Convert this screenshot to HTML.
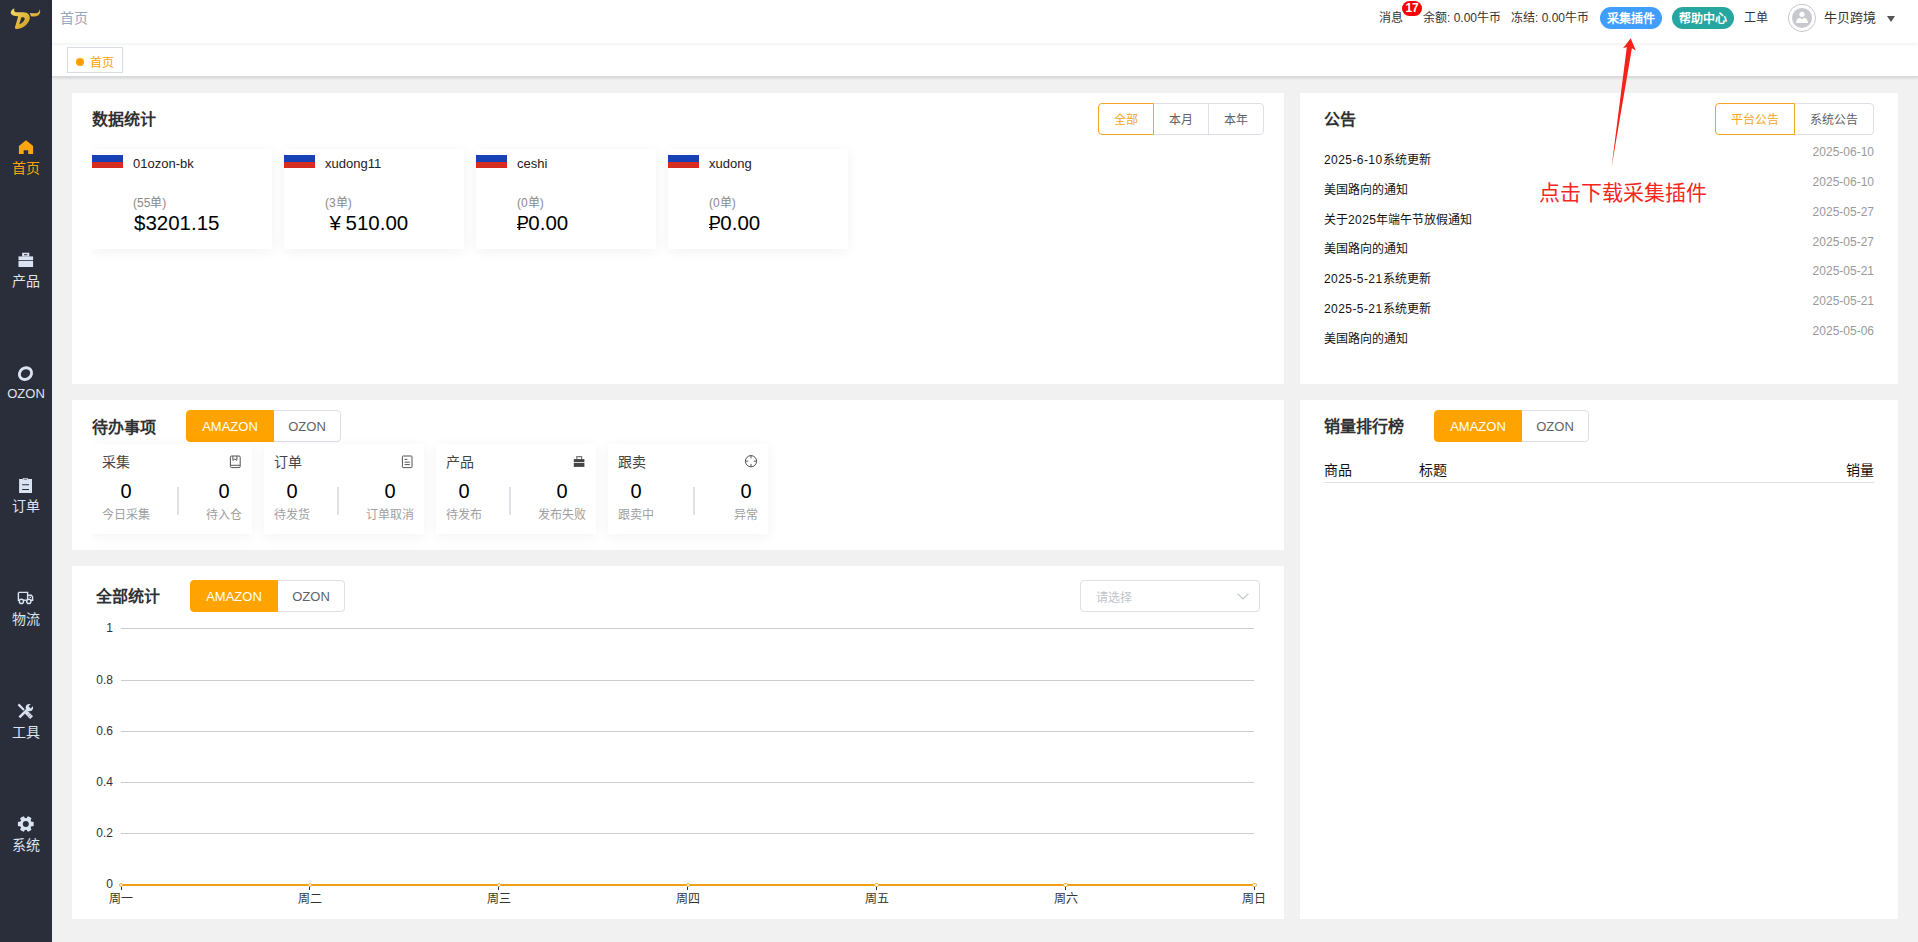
<!DOCTYPE html>
<html lang="zh-CN">
<head>
<meta charset="utf-8">
<title>首页</title>
<style>
*{box-sizing:border-box;margin:0;padding:0}
html,body{width:1918px;height:942px;overflow:hidden;background:#f1f1f1;font-family:"Liberation Sans",sans-serif;color:#303133;-webkit-font-smoothing:antialiased}
.abs{position:absolute}
/* sidebar */
#side{position:absolute;left:0;top:0;width:52px;height:942px;background:#2a2e3b}
.mi{position:absolute;left:0;width:52px;text-align:center;color:#dde4ee;font-size:14px;line-height:16px}
.mi svg{position:absolute}
.mi span{position:absolute;left:0;width:52px;text-align:center}
.mi.act{color:#ffa412}
/* header */
#hdr{position:absolute;left:52px;top:0;width:1866px;height:43px;background:#fff;box-shadow:0 1px 4px rgba(0,21,41,.08);z-index:3}
#hdr .bc{position:absolute;left:8px;top:9px;font-size:14px;line-height:18px;color:#97a8be}
.ht{position:absolute;top:10px;font-size:12px;line-height:16px;color:#333;white-space:nowrap}
.pill{position:absolute;top:7px;height:22px;width:62px;border-radius:11px;color:#fff;font-size:12px;font-weight:bold;line-height:24px;text-align:center;white-space:nowrap}
/* tags */
#tags{position:absolute;left:52px;top:43px;width:1866px;height:34px;background:#fff;border-bottom:1px solid #d9dadd;box-shadow:0 1px 3px 0 rgba(0,0,0,.12),0 0 3px 0 rgba(0,0,0,.04)}
#tags .tag{position:absolute;left:15px;top:4px;width:56px;height:26px;border:1px solid #d8dce5;background:#fff;color:#ffa000;font-size:12px;line-height:24px}
#tags .tag i{position:absolute;left:8px;top:10px;width:8px;height:8px;border-radius:50%;background:#ffa000}
#tags .tag span{position:absolute;left:22px;top:3px}
/* cards */
.card{position:absolute;background:#fff}
.ttl{position:absolute;font-size:16px;font-weight:bold;line-height:20px;color:#303133;white-space:nowrap}
.bg{position:absolute;height:32px;display:flex}
.bg div{height:32px;border:1px solid #dcdfe6;background:#fff;color:#606266;font-size:12px;line-height:32px;text-align:center;margin-left:-1px;white-space:nowrap}
.bg div:first-child{margin-left:0;border-radius:4px 0 0 4px}
.bg div:last-child{border-radius:0 4px 4px 0}
.bg div.on{background:#ffa300;border-color:#ffa300;color:#fff;position:relative}
.bg div.ol{border-color:#f5a623;color:#f5a623;position:relative;z-index:1}
.bg div.lat{font-size:13px}

.shop{position:absolute;top:56px;width:180px;height:99.5px;background:#fff;box-shadow:0 2px 12px 0 rgba(10,20,60,.06)}
.shop .fl{position:absolute;left:0;top:6px;width:31px;height:13px;background:linear-gradient(#1741b5 0,#1741b5 50%,#d52d20 50%,#d52d20 100%)}
.shop .nm{position:absolute;left:41px;top:7px;font-size:13px;line-height:16px;color:#222;white-space:nowrap}
.shop .ct{position:absolute;left:41px;top:46px;font-size:12px;line-height:16px;color:#8a8a8a;white-space:nowrap}
.shop .am{position:absolute;left:42px;top:62px;font-size:20.5px;line-height:24px;color:#000;white-space:nowrap}
.rub{position:relative;display:inline-block;transform:scaleX(.87);transform-origin:0 50%;margin-left:-1.4px;margin-right:-2px}
.rub:after{content:"";position:absolute;left:-.2px;top:15.7px;width:10px;height:1.1px;background:#000}
.rub:before{content:"";position:absolute;left:-.2px;top:12.5px;width:4px;height:1.1px;background:#000}
.clip{position:absolute;overflow:hidden}
.nt{position:absolute;left:24px;font-size:12px;line-height:16px;color:#111;white-space:nowrap}
.nd{position:absolute;right:24px;font-size:12px;line-height:16px;color:#9a9a9a;white-space:nowrap}

.td{position:absolute;top:44px;width:160px;height:90px;background:#fff;box-shadow:0 2px 12px 0 rgba(10,20,60,.055)}
.td .h{position:absolute;left:10px;top:10px;font-size:14px;line-height:16px;color:#444}
.td svg{position:absolute}
.td .dv{position:absolute;top:43px;width:2px;margin-left:-1px;height:28px;background:#e1e2e8}
.td .col{position:absolute;top:34px;text-align:center;white-space:nowrap}
.td .col b{display:block;font-weight:normal;font-size:20px;line-height:26px;color:#000}
.td .col i{display:block;font-style:normal;font-size:12px;line-height:16px;color:#a0a0a0;margin-top:3px}
.gl{position:absolute;left:49px;width:1133.4px;height:1px;background:#ccc}
.yl{position:absolute;left:0;width:41px;text-align:right;font-size:12px;line-height:14px;color:#333}
.xl{position:absolute;top:325.5px;width:40px;margin-left:-20px;text-align:center;font-size:12px;line-height:14px;color:#333}
.xt{position:absolute;top:319.6px;width:1px;height:4px;background:#333}
.pt{position:absolute;top:316.5px;width:4.4px;height:4.4px;margin-left:-2.2px;border-radius:50%;background:#fff;border:1px solid #f3b040}
</style>
</head>
<body>
<div id="side">
<svg class="abs" style="left:0;top:0" width="52" height="40" viewBox="0 0 52 40">
<defs><linearGradient id="gd" x1="0" y1="0" x2="1" y2="1"><stop offset="0" stop-color="#f7dc72"/><stop offset=".55" stop-color="#e2b93a"/><stop offset="1" stop-color="#c79a22"/></linearGradient></defs>
<path fill="url(#gd)" fill-rule="evenodd" d="M14.4 8.2 C12 9.5 10.2 11.5 10.8 13.2 C11.4 15.2 14 16.2 17.6 16.2 L18.2 16.3 L15 27.2 C14.8 28.6 15.8 29.2 17.6 29 C23 28.4 28 24.8 29.6 19.6 C30.6 16 28.6 12.9 25 12.5 C21 12.1 17.6 12.6 15.8 12.2 C14.2 11.8 13.8 10 14.4 8.2 Z M21.4 17.2 L19.2 24.4 C22.2 23.4 24.6 21 24.8 18.6 C24.8 17.6 23.6 17 21.4 17.2 Z"/>
<path fill="url(#gd)" d="M29.6 12.9 C32.5 13.3 35.5 13.5 37.2 12.9 C38.8 12.3 39.6 10.8 39.8 9 C40.6 11.4 40.2 14 38.6 15.2 C36.6 16.6 33 16.6 30.9 16.2 C30.7 15 30.3 14 29.6 12.9 Z"/>
</svg>
<!-- home -->
<div class="mi act" style="top:134px;height:46px">
<svg style="left:18px;top:6px" width="16" height="15" viewBox="0 0 16 15"><path fill="#ffa412" d="M8 .2 L15.1 5.9 V14 H10.2 V10.2 H5.7 V14 H.9 V5.9 Z"/></svg>
<span style="top:26px">首页</span></div>
<!-- product -->
<div class="mi" style="top:247px;height:46px">
<svg style="left:18px;top:5px" width="16" height="16" viewBox="0 0 16 16"><g fill="#d9e3f2"><path d="M4.1.7 H11.3 V4.4 H4.1 Z M6 2.3 V3.3 H9.4 V2.3 Z" fill-rule="evenodd"/><rect x=".5" y="4.4" width="14.6" height="3.6"/><rect x=".5" y="8.8" width="14.6" height="6.2"/></g></svg>
<span style="top:26px">产品</span></div>
<!-- ozon -->
<div class="mi" style="top:360px;height:46px">
<svg style="left:17px;top:5px" width="18" height="17" viewBox="0 0 18 17"><ellipse cx="8.5" cy="8.6" rx="6.4" ry="5.6" transform="rotate(-38 8.5 8.6)" fill="none" stroke="#d9e3f2" stroke-width="2.9"/></svg>
<span style="top:26px;font-size:13px">OZON</span></div>
<!-- order -->
<div class="mi" style="top:472px;height:46px">
<svg style="left:18px;top:5px" width="16" height="17" viewBox="0 0 16 17"><path fill="#d9e3f2" fill-rule="evenodd" d="M1.1 2 H4.9 V.9 H9.9 V2 H14 V16.1 H1.1 Z M5.6 1.7 H9.2 V2.5 H5.6 Z M4.1 7.2 H11 V8.2 H4.1 Z M4.1 11.9 H11 V12.9 H4.1 Z"/></svg>
<span style="top:26px">订单</span></div>
<!-- truck -->
<div class="mi" style="top:585px;height:46px">
<svg style="left:17px;top:6px" width="18" height="16" viewBox="0 0 18 16"><g fill="none" stroke="#d9e3f2" stroke-width="1.4"><path d="M1.4 1.4 H10.6 V9.2"/><path d="M1.4 1.4 V9.2 H2.2"/><path d="M6.6 9.2 H9.6"/><path d="M10.6 4.2 H14.4 L15.6 6 V9.2 H14"/><circle cx="4.4" cy="10.4" r="2.1"/><circle cx="11.8" cy="10.4" r="2.1"/><path d="M12.6 6.3 H14" stroke-width="1.2"/></g></svg>
<span style="top:26px">物流</span></div>
<!-- tools -->
<div class="mi" style="top:698px;height:46px">
<svg style="left:17px;top:5px" width="18" height="17" viewBox="0 0 18 17"><g stroke="#d9e3f2" fill="none"><path d="M2.4 14.4 L11 5.8" stroke-width="2.6"/><circle cx="12.4" cy="4.6" r="3.7" fill="#d9e3f2" stroke="none"/><path d="M12.6 4.4 L17.4 -.4" stroke="#2a2e3b" stroke-width="3"/><path d="M1.4 1.4 L7 7" stroke-width="2.2"/><path d="M9.2 9.2 L14.6 14.6" stroke-width="4"/><path d="M10.4 12.4 L12.6 10.2 M12 14 L14.2 11.8" stroke="#2a2e3b" stroke-width=".7" opacity=".55"/></g></svg>
<span style="top:26px">工具</span></div>
<!-- gear -->
<div class="mi" style="top:811px;height:46px">
<svg style="left:16px;top:4px" width="20" height="18" viewBox="0 0 20 18"><g transform="translate(9.8 9)"><g fill="#d9e3f2"><circle r="6.1"/><rect x="-2.2" y="-7.9" width="4.4" height="15.8" rx=".8" transform="rotate(30)"/><rect x="-2.2" y="-7.9" width="4.4" height="15.8" rx=".8" transform="rotate(90)"/><rect x="-2.2" y="-7.9" width="4.4" height="15.8" rx=".8" transform="rotate(150)"/></g><circle r="3" fill="#2a2e3b"/></g></svg>
<span style="top:26px">系统</span></div>
</div>
<div id="hdr"><div class="bc">首页</div>
<div class="ht" style="left:1327px">消息</div>
<div class="abs" style="left:1350px;top:1px;width:20px;height:15px;border-radius:7.5px;background:#f80000;color:#fff;font-size:12px;font-weight:bold;line-height:15px;text-align:center;letter-spacing:-.2px">17</div>
<div class="ht" style="left:1371px">余额: 0.00牛币</div>
<div class="ht" style="left:1459px">冻结: 0.00牛币</div>
<div class="pill" style="left:1548px;background:#409eff">采集插件</div>
<div class="pill" style="left:1620px;background:#25a6a0">帮助中心</div>
<div class="ht" style="left:1692px">工单</div>
<svg class="abs" style="left:1735px;top:3px" width="30" height="30" viewBox="0 0 30 30"><circle cx="15" cy="14.9" r="13.6" fill="#fff" stroke="#c8c8c8" stroke-width="1"/><circle cx="15" cy="14.9" r="10" fill="#c8c9cf"/><circle cx="15" cy="11.3" r="2.6" fill="#fff"/><path fill="#fff" d="M9 19.9 C9 17 11 15 13.2 15 L15 16.4 L16.8 15 C19 15 21 17 21 19.9 Z"/></svg>
<div class="ht" style="left:1772px;font-size:13px;top:9px;line-height:18px">牛贝跨境</div>
<div class="abs" style="left:1835px;top:16px;width:0;height:0;border-left:4.5px solid transparent;border-right:4.5px solid transparent;border-top:6px solid #555"></div>
</div>
<div id="tags"><div class="tag"><i></i><span>首页</span></div></div>

<div class="card" id="c1" style="left:72px;top:93px;width:1212px;height:291px">
<div class="ttl" style="left:20px;top:17px">数据统计</div>
<div class="bg" style="left:1026px;top:10px"><div class="ol" style="width:56px">全部</div><div style="width:56px">本月</div><div style="width:56px">本年</div></div>
<div class="clip" style="left:20px;top:0;width:1180px;height:291px">
<div class="shop" style="left:0"><div class="fl"></div><div class="nm">01ozon-bk</div><div class="ct">(55单)</div><div class="am">$3201.15</div></div>
<div class="shop" style="left:192px"><div class="fl"></div><div class="nm">xudong11</div><div class="ct">(3单)</div><div class="am" style="left:41px"><span style="display:inline-block;width:20.5px;text-align:center">¥</span>510.00</div></div>
<div class="shop" style="left:384px"><div class="fl"></div><div class="nm">ceshi</div><div class="ct">(0单)</div><div class="am"><span class="rub">P</span>0.00</div></div>
<div class="shop" style="left:576px"><div class="fl"></div><div class="nm">xudong</div><div class="ct">(0单)</div><div class="am"><span class="rub">P</span>0.00</div></div>
</div>
</div>
<div class="card" id="c2" style="left:72px;top:400px;width:1212px;height:150px">
<div class="ttl" style="left:20px;top:18px">待办事项</div>
<div class="bg" style="left:114px;top:10px"><div class="on lat" style="width:88px">AMAZON</div><div class="lat" style="width:68px">OZON</div></div>
<div class="clip" style="left:20px;top:0;width:1180px;height:150px">
<div class="td" style="left:0px"><div class="h">采集</div><svg style="left:137px;top:11px" width="13" height="14" viewBox="0 0 13 14"><g fill="none" stroke="#555" stroke-width="1"><rect x="1.4" y="1" width="9.8" height="11.6" rx="1.2"/><path d="M1.4 10.3 H11.2"/><path d="M3.9 1 V5.4 L5.9 3.9 L7.9 5.4 V1"/></g></svg><div class="col" style="left:10px;width:48px"><b>0</b><i>今日采集</i></div><div class="dv" style="left:86.0px"></div><div class="col" style="left:114px;width:36px"><b>0</b><i>待入仓</i></div></div>
<div class="td" style="left:172px"><div class="h">订单</div><svg style="left:137px;top:11px" width="13" height="14" viewBox="0 0 13 14"><g fill="none" stroke="#555" stroke-width="1"><rect x="1.4" y="1" width="9.6" height="11.6" rx=".8"/><path d="M3.6 4.4 H6.4 M3.6 7.2 H8.8 M3.6 9.6 H8.8"/></g></svg><div class="col" style="left:10px;width:36px"><b>0</b><i>待发货</i></div><div class="dv" style="left:74.0px"></div><div class="col" style="left:102px;width:48px"><b>0</b><i>订单取消</i></div></div>
<div class="td" style="left:344px"><div class="h">产品</div><svg style="left:137px;top:11px" width="13" height="14" viewBox="0 0 13 14"><g fill="#444"><path fill-rule="evenodd" d="M3.2 1 H9.2 V4.2 H3.2 Z M4.4 2.2 V4.2 H8 V2.2 Z" fill="#777"/><rect x=".8" y="4.1" width="10.6" height="3.05"/><rect x=".8" y="7.95" width="10.6" height="3.95"/></g></svg><div class="col" style="left:10px;width:36px"><b>0</b><i>待发布</i></div><div class="dv" style="left:74.0px"></div><div class="col" style="left:102px;width:48px"><b>0</b><i>发布失败</i></div></div>
<div class="td" style="left:516px"><div class="h">跟卖</div><svg style="left:136px;top:10px" width="14" height="14" viewBox="0 0 14 14"><g fill="none" stroke="#555" stroke-width="1"><circle cx="7" cy="7.2" r="5.6"/><path d="M7 1.6 V4.4 M7 10 V12.8 M1.4 7.2 H4.2 M9.8 7.2 H12.6"/></g></svg><div class="col" style="left:10px;width:36px"><b>0</b><i>跟卖中</i></div><div class="dv" style="left:86.0px"></div><div class="col" style="left:126px;width:24px"><b>0</b><i>异常</i></div></div>
</div>
</div>
<div class="card" id="c3" style="left:72px;top:566px;width:1212px;height:353px">
<div class="ttl" style="left:24px;top:21px">全部统计</div>
<div class="bg" style="left:118px;top:14px"><div class="on lat" style="width:88px">AMAZON</div><div class="lat" style="width:68px">OZON</div></div>
<div class="abs" style="left:1008px;top:14px;width:180px;height:32px;border:1px solid #dcdfe6;border-radius:4px;background:#fff"><span class="abs" style="left:15px;top:9px;font-size:12px;line-height:16px;color:#c0c4cc">请选择</span><svg class="abs" style="left:154.5px;top:11px" width="14" height="9" viewBox="0 0 14 9"><path d="M1.6 1.6 L7 7 L12.4 1.6" fill="none" stroke="#c0c4cc" stroke-width="1.2"/></svg></div>
<div class="gl" style="top:62px"></div><div class="yl" style="top:55.4px">1</div>
<div class="gl" style="top:114px"></div><div class="yl" style="top:107.4px">0.8</div>
<div class="gl" style="top:165px"></div><div class="yl" style="top:158.4px">0.6</div>
<div class="gl" style="top:216px"></div><div class="yl" style="top:209.4px">0.4</div>
<div class="gl" style="top:267px"></div><div class="yl" style="top:260.4px">0.2</div>
<div class="yl" style="top:311.2px">0</div>
<div class="abs" style="left:49px;top:317.7px;width:1133.4px;height:2px;background:#f0a010"></div>
<div class="xt" style="left:48.5px"></div><div class="pt" style="left:49.0px"></div><div class="xl" style="left:49.0px">周一</div>
<div class="xt" style="left:237.4px"></div><div class="pt" style="left:237.9px"></div><div class="xl" style="left:237.9px">周二</div>
<div class="xt" style="left:426.3px"></div><div class="pt" style="left:426.8px"></div><div class="xl" style="left:426.8px">周三</div>
<div class="xt" style="left:615.2px"></div><div class="pt" style="left:615.7px"></div><div class="xl" style="left:615.7px">周四</div>
<div class="xt" style="left:804.1px"></div><div class="pt" style="left:804.6px"></div><div class="xl" style="left:804.6px">周五</div>
<div class="xt" style="left:993.0px"></div><div class="pt" style="left:993.5px"></div><div class="xl" style="left:993.5px">周六</div>
<div class="xt" style="left:1181.9px"></div><div class="pt" style="left:1182.4px"></div><div class="xl" style="left:1182.4px">周日</div>
</div>
<div class="card" id="c4" style="left:1300px;top:93px;width:598px;height:291px">
<div class="ttl" style="left:24px;top:16.5px">公告</div>
<div class="bg" style="left:415px;top:10px"><div class="ol" style="width:80px">平台公告</div><div style="width:80px">系统公告</div></div>
<div class="nt" style="top:59px"><span style="letter-spacing:.42px">2025-6-10</span>系统更新</div><div class="nd" style="top:51px">2025-06-10</div>
<div class="nt" style="top:89px">美国路向的通知</div><div class="nd" style="top:81px">2025-06-10</div>
<div class="nt" style="top:119px">关于<span style="letter-spacing:.42px">2025</span>年端午节放假通知</div><div class="nd" style="top:111px">2025-05-27</div>
<div class="nt" style="top:148px">美国路向的通知</div><div class="nd" style="top:141px">2025-05-27</div>
<div class="nt" style="top:178px"><span style="letter-spacing:.42px">2025-5-21</span>系统更新</div><div class="nd" style="top:170px">2025-05-21</div>
<div class="nt" style="top:208px"><span style="letter-spacing:.42px">2025-5-21</span>系统更新</div><div class="nd" style="top:200px">2025-05-21</div>
<div class="nt" style="top:238px">美国路向的通知</div><div class="nd" style="top:230px">2025-05-06</div>
</div>
<div class="card" id="c5" style="left:1300px;top:400px;width:598px;height:519px">
<div class="ttl" style="left:24px;top:17px">销量排行榜</div>
<div class="bg" style="left:134px;top:10px"><div class="on lat" style="width:88px">AMAZON</div><div class="lat" style="width:68px">OZON</div></div>
<div class="abs" style="left:24px;top:62px;font-size:14px;line-height:16px;color:#111">商品</div>
<div class="abs" style="left:119px;top:62px;font-size:14px;line-height:16px;color:#111">标题</div>
<div class="abs" style="right:24px;top:62px;font-size:14px;line-height:16px;color:#111">销量</div>
<div class="abs" style="left:24px;top:82px;width:550px;height:1px;background:#e2e2e2"></div>
</div>
<svg class="abs" style="left:1600px;top:30px;z-index:10" width="50" height="145" viewBox="1600 30 50 145"><polygon fill="#f62119" points="1630.7,38.3 1635.8,50.5 1631.9,48.2 1611.5,167.6 1626.8,46.9 1623,48.2"/></svg>
<div class="abs" style="left:1539px;top:180px;z-index:10;font-size:21px;line-height:26px;color:#f2281c;white-space:nowrap">点击下载采集插件</div>
</body>
</html>
